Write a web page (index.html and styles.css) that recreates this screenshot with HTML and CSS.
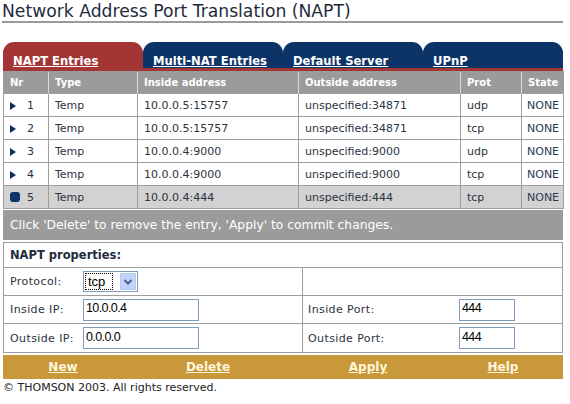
FILE: index.html
```html
<!DOCTYPE html>
<html>
<head>
<meta charset="utf-8">
<link rel="stylesheet" href="styles.css">
</head>
<body>
<div class="page">
  <h1 class="title">Network Address Port Translation (NAPT)</h1>

  <div class="tabs">
    <a class="tab active" href="#">NAPT Entries</a>
    <a class="tab" href="#">Multi-NAT Entries</a>
    <a class="tab" href="#">Default Server</a>
    <a class="tab" href="#">UPnP</a>
  </div>
  <div class="tabbar"></div>

  <table class="entries">
    <colgroup>
      <col class="c-nr"><col class="c-type"><col class="c-in"><col class="c-out"><col class="c-prot"><col class="c-state">
    </colgroup>
    <thead>
      <tr><th>Nr</th><th>Type</th><th>Inside address</th><th>Outside address</th><th>Prot</th><th>State</th></tr>
    </thead>
    <tbody>
      <tr><td><span class="arrow"></span><span class="num">1</span></td><td>Temp</td><td>10.0.0.5:15757</td><td>unspecified:34871</td><td>udp</td><td class="st">NONE</td></tr>
      <tr><td><span class="arrow"></span><span class="num">2</span></td><td>Temp</td><td>10.0.0.5:15757</td><td>unspecified:34871</td><td>tcp</td><td class="st">NONE</td></tr>
      <tr><td><span class="arrow"></span><span class="num">3</span></td><td>Temp</td><td>10.0.0.4:9000</td><td>unspecified:9000</td><td>udp</td><td class="st">NONE</td></tr>
      <tr><td><span class="arrow"></span><span class="num">4</span></td><td>Temp</td><td>10.0.0.4:9000</td><td>unspecified:9000</td><td>tcp</td><td class="st">NONE</td></tr>
      <tr class="sel"><td><span class="square"></span><span class="num">5</span></td><td>Temp</td><td>10.0.0.4:444</td><td>unspecified:444</td><td>tcp</td><td class="st">NONE</td></tr>
    </tbody>
  </table>

  <div class="message">Click 'Delete' to remove the entry, 'Apply' to commit changes.</div>

  <div class="props">
    <div class="props-head">NAPT properties:</div>
    <div class="props-grid">
      <div class="cell left">
        <span class="lbl">Protocol:</span>
        <span class="selectbox">
          <span class="selval"><span class="focus">tcp</span></span>
          <span class="selbtn"><svg width="8" height="6" viewBox="0 0 8 6"><path d="M0.5 1 L4 4.5 L7.5 1" fill="none" stroke="#4d6185" stroke-width="2"/></svg></span>
        </span>
      </div>
      <div class="cell right"></div>
      <div class="cell left">
        <span class="lbl">Inside IP:</span>
        <input class="field ip" type="text" value="10.0.0.4">
      </div>
      <div class="cell right">
        <span class="lbl rl">Inside Port:</span>
        <input class="field port" type="text" value="444">
      </div>
      <div class="cell left">
        <span class="lbl">Outside IP:</span>
        <input class="field ip" type="text" value="0.0.0.0">
      </div>
      <div class="cell right">
        <span class="lbl rl">Outside Port:</span>
        <input class="field port" type="text" value="444">
      </div>
    </div>
  </div>

  <div class="actions">
    <a href="#" class="a1">New</a>
    <a href="#" class="a2">Delete</a>
    <a href="#" class="a3">Apply</a>
    <a href="#" class="a4">Help</a>
  </div>

  <div class="footer">© THOMSON 2003. All rights reserved.</div>
</div>
</body>
</html>
```

FILE: styles.css
```css
html, body {
  margin: 0;
  padding: 0;
  background: #ffffff;
}
body {
  font-family: "DejaVu Sans", Verdana, sans-serif;
  color: #2b3340;
}
.page {
  width: 560px;
  padding-left: 3px;
}
.title {
  margin: 0 0 0 -1px;
  width: 561px;
  font-size: 17.2px;
  font-weight: normal;
  color: #1e2b3c;
  line-height: 20px;
  padding-top: 1px;
  border-bottom: 2px solid #9a9a9a;
}
.tabs {
  display: flex;
  margin-top: 19px;
  height: 26px;
}
.tab {
  width: 140px;
  box-sizing: border-box;
  padding: 12px 0 0 10px;
  background: #0c3466;
  border-radius: 11px 11px 0 0;
  color: #ffffff;
  font-weight: bold;
  font-size: 11.6px;
  line-height: 14px;
  text-decoration: underline;
}
.tab.active {
  background: #a43535;
}
.tabbar {
  height: 3px;
  background: #a43535;
}
.entries {
  width: 560px;
  border-collapse: collapse;
  table-layout: fixed;
  font-size: 11px;
}
.c-nr { width: 45px; }
.c-type { width: 89px; }
.c-in { width: 161px; }
.c-out { width: 162px; }
.c-prot { width: 61px; }
.c-state { width: 42px; }
.entries th {
  background: #9b9b9b;
  color: #ffffff;
  font-weight: bold;
  font-size: 10px;
  text-align: left;
  height: 21px;
  padding: 0 0 0 6px;
  border-left: 1px solid #d8d8d8;
  border-top: 1px solid #9b9b9b;
  white-space: nowrap;
  overflow: hidden;
}
.entries th:first-child { border-left: 1px solid #9b9b9b; }
.entries td {
  height: 22px;
  padding: 0 0 0 6px;
  border: 1px solid #9e9e9e;
  white-space: nowrap;
  overflow: hidden;
}
.entries tr.sel td {
  background: #d2d2d2;
}
.entries td.st { padding-left: 5px; color: #2c3a52; }
.arrow {
  display: inline-block;
  width: 0;
  height: 0;
  border-top: 4px solid transparent;
  border-bottom: 4px solid transparent;
  border-left: 6px solid #0c2f5e;
  margin: 0;
  vertical-align: -1px;
}
.square {
  display: inline-block;
  width: 10px;
  height: 10px;
  background: #0c3466;
  border-radius: 3px;
  vertical-align: -1px;
}
.num {
  margin-left: 11px;
}
.sel .num { margin-left: 7px; }
.message {
  margin-top: 1px;
  height: 30px;
  line-height: 30px;
  background: #9b9b9b;
  color: #ffffff;
  font-size: 12.3px;
  padding-left: 7px;
}
.props {
  margin-top: 2px;
  border: 1px solid #9e9e9e;
  width: 558px;
}
.props-head {
  height: 24px;
  line-height: 24px;
  padding-left: 6px;
  font-weight: bold;
  font-size: 11.5px;
  color: #1e2b3c;
  border-bottom: 1px solid #9e9e9e;
}
.props-grid {
  display: grid;
  grid-template-columns: 298px 260px;
  grid-auto-rows: 28px;
}
.cell {
  display: flex;
  align-items: center;
  border-bottom: 1px solid #9e9e9e;
  font-size: 11px;
}
.cell:nth-last-child(-n+2) { border-bottom: none; }
.cell.right {
  border-left: 1px solid #9e9e9e;
}
.lbl {
  width: 73px;
  padding-left: 6px;
  flex: none;
  letter-spacing: 0.4px;
}
.lbl.rl {
  width: 151px;
  padding-left: 5px;
}
.field {
  box-sizing: border-box;
  height: 22px;
  border: 1px solid #7f9db9;
  padding: 0 2px 3px 2px;
  font-family: "Liberation Sans", Arial, sans-serif;
  font-size: 12.5px;
  letter-spacing: -0.6px;
  color: #000000;
  background: #ffffff;
  margin: 0;
}
.field.ip { width: 116px; }
.field.port { width: 56px; }
.selectbox {
  position: relative;
  display: inline-flex;
  align-items: center;
  box-sizing: border-box;
  width: 55px;
  height: 21px;
  border: 1px solid #7f9db9;
  background: #ffffff;
}
.selval {
  flex: 1;
  padding-left: 1px;
  font-family: "Liberation Sans", Arial, sans-serif;
  font-size: 13px;
  color: #000;
}
.focus {
  display: inline-block;
  border: 1px dotted #000;
  padding: 0 7px 0 2px;
  line-height: 15px;
}
.selbtn {
  width: 16px;
  height: 17px;
  margin-right: 1px;
  background: #c1d3fb;
  border: 1px solid #b7c9ef;
  box-sizing: border-box;
  display: flex;
  align-items: center;
  justify-content: center;
}
.actions {
  margin-top: 2px;
  height: 24px;
  background: #c9983a;
  display: grid;
  grid-template-columns: 120px 170px 150px 120px;
  align-items: center;
}
.actions a {
  text-align: center;
  color: #fff6dc;
  font-weight: bold;
  font-size: 12px;
  text-decoration: underline;
}
.footer {
  font-size: 11px;
  color: #222;
  margin-top: 2px;
  line-height: 14px;
}
```
